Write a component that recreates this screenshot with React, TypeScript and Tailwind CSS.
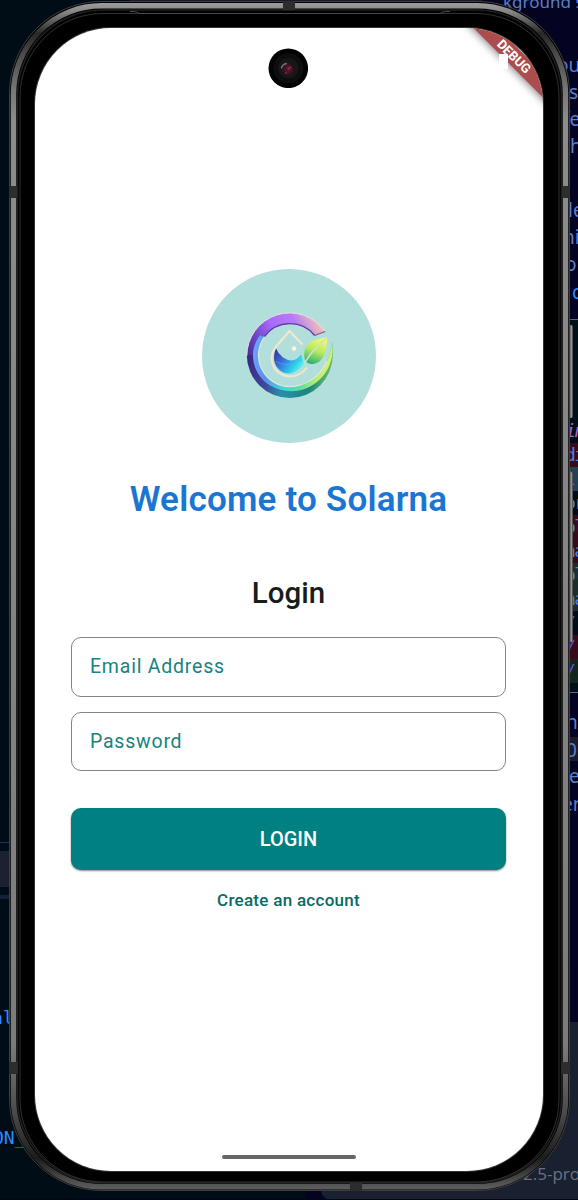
import React from 'react';

type Glyph = { t: string; y: number; x?: number; k?: string };

const sideGlyphs: Glyph[] = [
  { t: 'ou', y: 52, x: 557 },
  { t: 's', y: 79, x: 569 },
  { t: 'fe', y: 106, x: 563 },
  { t: 'h', y: 133, x: 570 },
  { t: 'le', y: 197, x: 568 },
  { t: 'ni', y: 224, x: 563 },
  { t: 'o', y: 251, x: 565 },
  { t: 'c', y: 279, x: 572, k: 'text-[#2f8cff]' },
  { t: 'n', y: 709, x: 566 },
  { t: '0', y: 737, x: 566 },
  { t: 'e', y: 763, x: 569 },
  { t: 'er', y: 791, x: 562 },
];

const codeRows = [
  { t: 'in', s: 'bg-[#000d18] italic text-[#a565c8]' },
  { t: 'di', s: 'bg-[#360b1b] text-[#527ee0]' },
  { t: 'l:', s: 'bg-[#263f52] text-[#527ee0]' },
  { t: 'or', s: 'bg-[#000d18] text-[#527ee0]' },
  { t: 'ol', s: 'bg-[#360b1b] text-[#527ee0]' },
  { t: 'na', s: 'bg-[#360b1b] text-[#527ee0]' },
  { t: 'ol', s: 'bg-[#1d2d2b] text-[#527ee0]' },
  { t: 'na', s: 'bg-[#1d2d2b] text-[#527ee0]' },
  { t: '/', s: 'bg-[#000d18] text-[#59617b]' },
  { t: '/', s: 'bg-[#360b1b] text-[#5b55c9]' },
  { t: '/', s: 'bg-[#12251f] text-[#5b55c9]' },
];

function Desktop() {
  return (
    <div className="absolute inset-0 flex overflow-hidden bg-[#000d17]">
      <div className="absolute top-0 left-[130px] h-px w-[352px] bg-[#1c1928]" />
      <div className="flex w-[130px] flex-col pt-[842px]">
        <div className="h-px bg-[#28314d]" />
        <div className="mt-2 h-9 bg-[#1c2030]" />
        <div className="mt-2 h-1 bg-[#152039]" />
      </div>
      <div className="ml-auto flex w-[273px] flex-col bg-[#040321]">
        <div className="h-[319px]" />
        <div className="h-px bg-[#5a6488]" />
        <div className="flex h-[372px] flex-col bg-[#001018] pt-[99px]">
          {codeRows.map((r, i) => (
            <div
              key={i}
              className={`h-6 w-full shrink-0 overflow-hidden pl-[260px] font-['DejaVu_Sans_Mono',monospace] text-[18px] leading-6 tracking-[-1.500px] whitespace-nowrap ${r.s}`}
            >
              {r.t}
            </div>
          ))}
        </div>
        <div className="h-px bg-[#5a6488]" />
        <div className="mt-[44px] h-6 bg-[#1b1b2d]" />
        <div className="mt-auto ml-4 h-[178px] rounded-bl-[10px] bg-[#192030]" />
      </div>
      <span className="absolute -top-[11px] left-[503px] font-['Noto_Sans',sans-serif] text-[17px] leading-[26px] whitespace-nowrap text-[#5b7fc9]">kground s</span>
      {sideGlyphs.map((g, i) => (
        <span
          key={i}
          className={`absolute font-['Noto_Sans',sans-serif] text-[19px] leading-[26px] whitespace-nowrap ${g.k ?? 'text-[#5b7fc9]'}`}
          style={{ left: g.x, top: g.y }}
        >
          {g.t}
        </span>
      ))}
      <span className="absolute top-[1006px] -left-[8px] font-['DejaVu_Sans_Mono',monospace] text-[18px] leading-6 text-[#2f8cff]">al</span>
      <span className="absolute top-[1126px] -left-[7px] font-['DejaVu_Sans_Mono',monospace] text-[18px] leading-6 text-[#2f8cff]">ON_</span>
      <span className="absolute top-[1162px] left-[523px] font-['Open_Sans',sans-serif] text-[17px] leading-6 whitespace-nowrap text-[#6c7180]">2.5-pro-</span>
      <div className="absolute inset-x-0 bottom-0 h-px bg-[#03031c]" />
    </div>
  );
}

function FrameArt() {
  return (
    <svg className="pointer-events-none absolute inset-0 h-full w-full" viewBox="0 0 578 1200" fill="none">
      <defs>
        <linearGradient id="metal" x1="0" y1="0" x2="0" y2="1200" gradientUnits="userSpaceOnUse">
          <stop offset="0" stopColor="#a5a5a5" />
          <stop offset=".01" stopColor="#858585" />
          <stop offset=".028" stopColor="#282828" />
          <stop offset=".045" stopColor="#4a4a4a" />
          <stop offset=".075" stopColor="#777" />
          <stop offset=".1" stopColor="#8c8c8c" />
          <stop offset=".87" stopColor="#7c7c7c" />
          <stop offset=".93" stopColor="#484848" />
          <stop offset=".965" stopColor="#1c1c1c" />
          <stop offset=".985" stopColor="#505050" />
          <stop offset="1" stopColor="#707070" />
        </linearGradient>
        <linearGradient id="key" x1="569" y1="0" x2="573" y2="0" gradientUnits="userSpaceOnUse">
          <stop stopColor="#333" />
          <stop offset=".6" stopColor="#999" />
          <stop offset="1" stopColor="#333" />
        </linearGradient>
      </defs>
      <rect x="567" y="325" width="6" height="93" rx="2" fill="url(#key)" />
      <rect x="567" y="472" width="6" height="170" rx="2" fill="url(#key)" />
      <rect x="9.500" y="1.500" width="560" height="1189" rx="92" fill="#000" stroke="#404040" />
      <rect x="13.500" y="5.800" width="552" height="1181" rx="88" stroke="url(#metal)" strokeWidth="5.500" />
      <rect x="17.500" y="10" width="544" height="1173" rx="85" stroke="#202020" strokeWidth="1.500" />
      <rect x="20" y="13.500" width="539" height="1168.500" rx="83" stroke="#3c3c3c" strokeWidth=".8" />
      <path d="M130 11.500h4q3 0 5 2h301q3-2 6-2h4" stroke="#484848" />
      <g fill="#2d2d2d">
        <path d="M9 186h8v12H9zM562 186h8v12h-8zM9 1062h9v12H9zM561 1062h9v12h-9zM283 1h12v9h-12zM350 1183h12v8h-12z" />
      </g>
    </svg>
  );
}

function Camera() {
  return (
    <svg className="absolute top-12 left-[268px] h-10 w-10" viewBox="0 0 40 40">
      <defs>
        <radialGradient id="lens" cx=".62" cy=".45" r=".6">
          <stop stopColor="#6e1733" />
          <stop offset=".45" stopColor="#421527" />
          <stop offset="1" stopColor="#171318" />
        </radialGradient>
      </defs>
      <circle cx="20.300" cy="20.300" r="19.800" fill="#030303" />
      <circle cx="20.300" cy="20.300" r="15" fill="#0e0e0e" />
      <circle cx="20.300" cy="20.300" r="11" fill="#171717" stroke="#090909" />
      <circle cx="18.800" cy="21.500" r="6.500" fill="url(#lens)" />
      <path d="M13.300 20.500q1-4.500 5.500-5" stroke="#77757a" strokeWidth="1.300" fill="none" />
      <path d="M20 21l3-2" stroke="#b03c64" strokeWidth="1" />
      <circle cx="18" cy="25" r=".8" fill="#93531c" />
    </svg>
  );
}

function Logo() {
  return (
    <svg className="h-[90px] w-[90px]" viewBox="244 309.500 90 90" fill="none">
      <defs>
        <linearGradient id="ringTop" x1="249" y1="370" x2="324" y2="328" gradientUnits="userSpaceOnUse">
          <stop stopColor="#38257f" />
          <stop offset=".28" stopColor="#7046cb" />
          <stop offset=".5" stopColor="#a96bfa" />
          <stop offset=".75" stopColor="#b77bf7" />
          <stop offset="1" stopColor="#f0c4b4" />
        </linearGradient>
        <linearGradient id="ringLow" x1="253" y1="345" x2="332" y2="360" gradientUnits="userSpaceOnUse">
          <stop stopColor="#68a6f8" />
          <stop offset=".22" stopColor="#5b90ec" />
          <stop offset=".45" stopColor="#44d3dd" />
          <stop offset=".68" stopColor="#60dda0" />
          <stop offset=".85" stopColor="#b9ee70" />
          <stop offset="1" stopColor="#d8f270" />
        </linearGradient>
        <linearGradient id="ringShade" x1="247" y1="350" x2="332" y2="375" gradientUnits="userSpaceOnUse">
          <stop stopColor="#3d237f" />
          <stop offset=".3" stopColor="#40479b" />
          <stop offset=".5" stopColor="#278faa" />
          <stop offset=".8" stopColor="#1d867e" />
          <stop offset="1" stopColor="#7bc565" />
        </linearGradient>
        <linearGradient id="water" x1="274" y1="350" x2="301" y2="369" gradientUnits="userSpaceOnUse">
          <stop stopColor="#392e9f" />
          <stop offset=".4" stopColor="#3777dc" />
          <stop offset=".75" stopColor="#28d3eb" />
          <stop offset="1" stopColor="#74f4e8" />
        </linearGradient>
        <linearGradient id="leaf" x1="322" y1="337" x2="312" y2="363" gradientUnits="userSpaceOnUse">
          <stop stopColor="#f8f96e" />
          <stop offset=".5" stopColor="#b4e95e" />
          <stop offset="1" stopColor="#27ae76" />
        </linearGradient>
      </defs>
      <path d="M325.200 330A43 43 0 0 0 246.800 354.500L258.500 353.700A31.500 31.500 0 0 1 314.600 334Z" fill="url(#ringTop)" />
      <path d="M246.800 353.500A43 43 0 0 0 332.800 353.500Q333 346 331.700 340C330 368 311 385.200 290 385.200A31.500 31.500 0 0 1 258.500 353.500Z" fill="url(#ringShade)" />
      <path d="M260 334C249 347 250 371 270 384C299 400 331 380 332.500 350Q332.500 345 331.700 340C330 368 311 385.200 290 385.200A31.500 31.500 0 0 1 264.500 335.200Z" fill="url(#ringLow)" />
      <path d="M325.200 330A43 43 0 0 0 246.800 354.500" stroke="#eedde2" strokeWidth="1" />
      <path d="M314.600 334A31.500 31.500 0 0 0 264.500 335.200" stroke="#603aa6" strokeWidth="1.300" />
      <path d="M325.200 330L314.600 334" stroke="#7c5b8c" strokeWidth="1.200" />
      <path d="M264.500 335.200A31.500 31.500 0 0 0 290 385.200C304 385 319 377 327 360" stroke="#e9edcf" strokeWidth="1.100" />
      <path d="M302.500 343L289.500 329.500Q283 337 276 345C265 360 277 375 290 375Q300 375 307 366" stroke="#f5e6cd" strokeWidth="2" />
      <path d="M276 347C270 361 279 372 289 372Q298 371 304 362L301 353Q294 363 283 356Q278 352 276 347Z" fill="url(#water)" />
      <path d="M276 360Q287 367 302 358" stroke="#5aaae8" strokeWidth=".7" />
      <circle cx="294" cy="347" r="2.200" fill="#fff4e0" />
      <path d="M327 335.500Q327 359 315 362Q309 364 305 359Q301 342 317 338Z" fill="url(#leaf)" />
      <path d="M326.500 336Q318 344 311 352L304 362" stroke="#c4e5c8" strokeWidth="1.700" />
    </svg>
  );
}

export default function App() {
  return (
    <div className="relative h-[1200px] w-[578px] overflow-hidden font-['Roboto',sans-serif]">
      <Desktop />
      <FrameArt />
      <div className="relative pt-7 pl-[34.500px]">
        <main className="relative flex h-[1143px] w-[508.500px] flex-col items-center overflow-hidden rounded-[76px] bg-white pt-[241px] pr-[37px] pl-[36.500px] shadow-[0_0_0_1px_#333]">
          <div className="flex h-[174px] w-[174px] shrink-0 items-center justify-center rounded-full bg-[#b2dfdc]">
            <Logo />
          </div>
          <h1 className="mt-[34px] text-[35px] leading-[46px] font-semibold tracking-[0.200px] whitespace-nowrap text-[#1976d2]">Welcome to Solarna</h1>
          <h2 className="mt-[51px] text-[29.500px] leading-[38px] font-medium whitespace-nowrap text-[#171d1b]">Login</h2>
          <div className="mt-[25px] flex h-[60px] w-full shrink-0 items-center rounded-[10px] border border-[#808684] pb-px pl-[18px] text-[19.500px] tracking-[0.780px] text-[#168480]">Email Address</div>
          <div className="mt-[15px] flex h-[59px] w-full shrink-0 items-center rounded-[10px] border border-[#808684] pl-[18px] text-[19.500px] tracking-[0.780px] text-[#168480]">Password</div>
          <button className="mt-[37px] flex h-[62px] w-full shrink-0 items-center justify-center rounded-[10px] bg-[#008080] text-[20px] font-medium text-white shadow-[0_1px_2px_#0007]">LOGIN</button>
          <button className="mt-[17px] text-[17px] leading-[26px] font-medium tracking-[0.280px] text-[#0b6964]">Create an account</button>
          <div className="absolute bottom-[12px] left-[187px] h-[4px] w-[134px] rounded-full bg-[#666]" />
          <div className="absolute top-[20px] left-[419.500px] flex h-[17px] w-[120px] rotate-45 items-center justify-center bg-[#ad4c4c] text-[13px] font-bold text-white shadow-[0_1px_8px_#0008]">DEBUG</div>
          <div className="absolute top-[26px] left-[464.500px] h-[15px] w-[9px] bg-white" />
        </main>
      </div>
      <Camera />
    </div>
  );
}
